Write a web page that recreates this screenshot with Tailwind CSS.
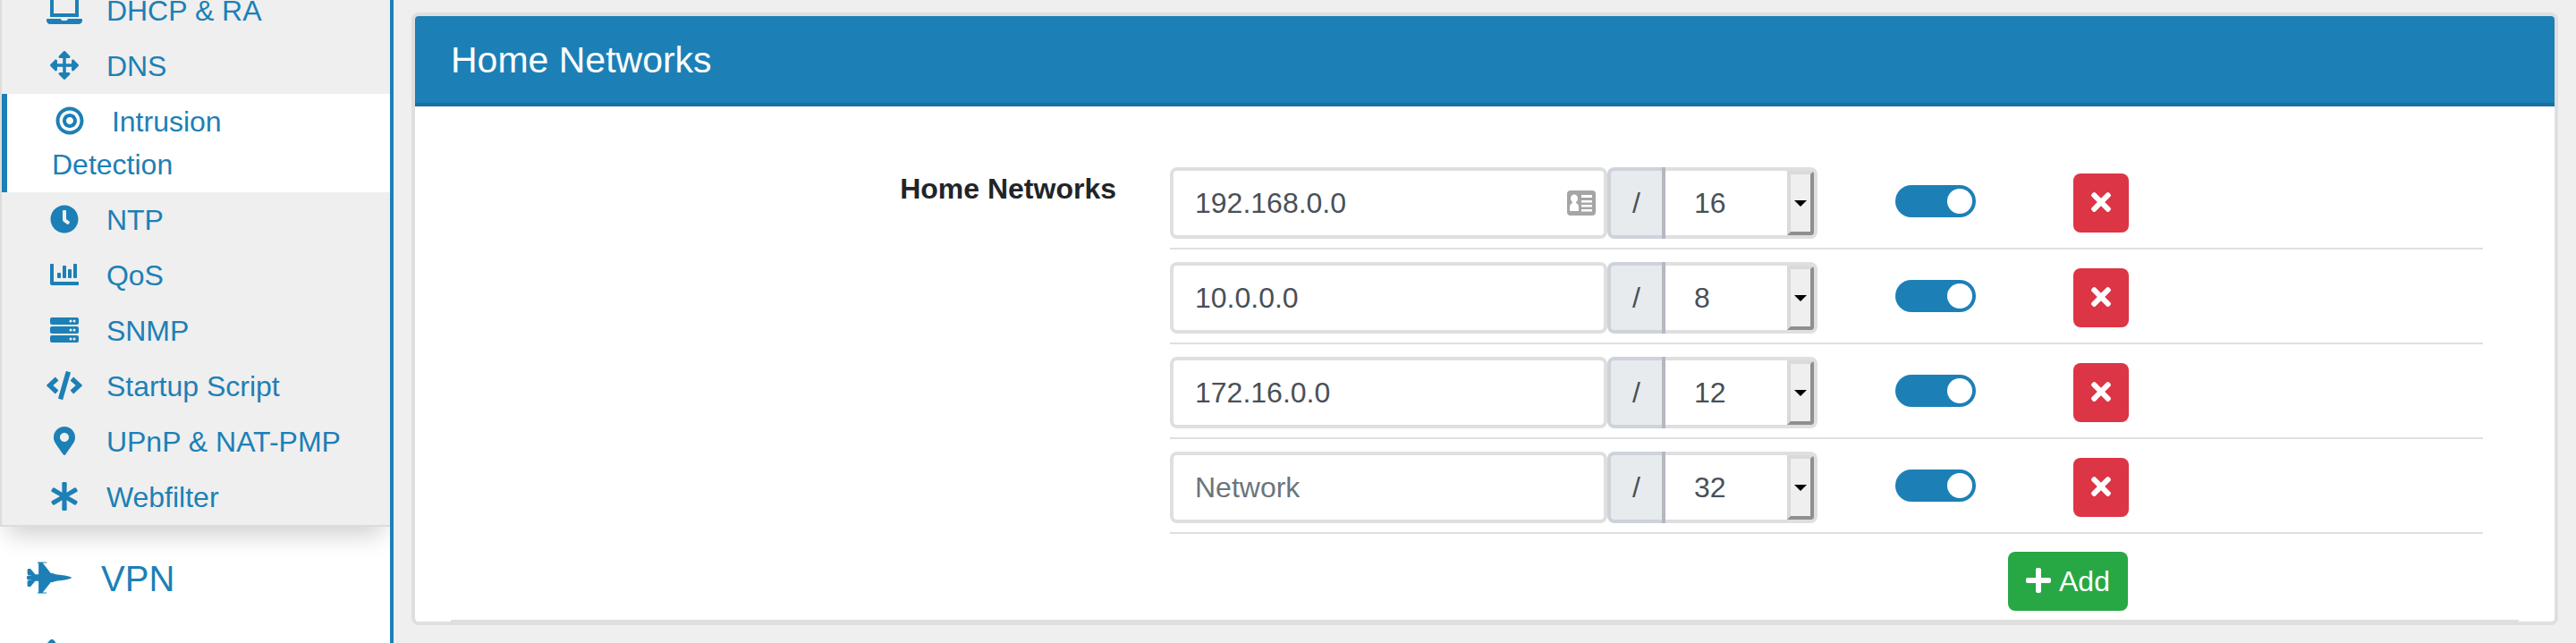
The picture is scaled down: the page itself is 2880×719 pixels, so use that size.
<!DOCTYPE html>
<html lang="en">
<head>
  <meta charset="UTF-8" />
  <meta name="viewport" content="width=device-width, initial-scale=1.0"/>
  <title>Home Networks - Intrusion Detection</title>
  <script src="https://cdn.jsdelivr.net/npm/@tailwindcss/browser@4"></script>
</head>
<body class="bg-[#efefef] font-['Liberation_Sans',Arial,sans-serif] text-[32px] leading-[48px] text-[#212529] overflow-hidden">

  <!-- Shared icons -->
  <svg class="hidden">
    <symbol id="times" viewBox="0 0 352 512"><path d="M242.72 256l100.07-100.07c12.28-12.28 12.28-32.19 0-44.48l-22.24-22.24c-12.28-12.28-32.19-12.28-44.48 0L176 189.28 75.93 89.21c-12.28-12.28-32.19-12.28-44.48 0L9.21 111.45c-12.28 12.28-12.28 32.19 0 44.48L109.28 256 9.21 356.07c-12.28 12.28-12.28 32.19 0 44.48l22.24 22.24c12.28 12.28 32.2 12.28 44.48 0L176 322.72l100.07 100.07c12.28 12.28 32.2 12.28 44.48 0l22.24-22.24c12.28-12.28 12.28-32.19 0-44.48L242.72 256z"/></symbol>
    <symbol id="caret" viewBox="0 0 14 7"><path d="M0 0h14L7 7z"/></symbol>
  </svg>

  <div class="flex h-[719px] overflow-hidden">

    <!-- Sidebar -->
    <aside class="w-[440px] shrink-0 bg-white border-r-4 border-[#1c80b6] text-[#1c80b6] overflow-hidden">
      <ul class="-mt-[19px] bg-[#efefef] border-l-2 border-b-2 border-[#dcdcdc] shadow-[0_16px_26px_-8px_rgba(0,0,0,0.2)]">
        <li class="pl-[50px] py-[7px]"><a href="#"><svg class="inline w-10 h-8 mr-[18px] align-[-4px]" viewBox="0 0 640 512" fill="currentColor"><path d="M624 416H381.54c-.74 19.81-14.71 32-32.74 32H288c-18.69 0-33.02-17.47-32.77-32H16c-8.8 0-16 7.2-16 16v16c0 35.2 28.8 64 64 64h512c35.2 0 64-28.8 64-64v-16c0-8.8-7.2-16-16-16zM576 48c0-26.4-21.6-48-48-48H112C85.6 0 64 21.6 64 48v336h512V48zm-64 272H128V64h384v256z"/></svg> DHCP &amp; RA</a></li>
        <li class="pl-[50px] py-[7px]"><a href="#"><svg class="inline w-10 h-8 mr-[18px] align-[-4px]" viewBox="0 0 512 512" fill="currentColor"><path d="M352.201 425.775l-79.196 79.196c-9.373 9.373-24.568 9.373-33.941 0l-79.196-79.196c-15.119-15.119-4.411-40.971 16.971-40.97h51.162L228 284H127.196v51.162c0 21.382-25.851 32.09-40.971 16.971L7.029 272.937c-9.373-9.373-9.373-24.569 0-33.941L86.225 159.8c15.119-15.119 40.971-4.411 40.971 16.971V228H228V127.196h-51.23c-21.382 0-32.09-25.851-16.971-40.971l79.196-79.196c9.373-9.373 24.568-9.373 33.941 0l79.196 79.196c15.119 15.119 4.411 40.971-16.971 40.971h-51.162V228h100.804v-51.162c0-21.382 25.851-32.09 40.97-16.971l79.196 79.196c9.373 9.373 9.373 24.569 0 33.941L425.773 352.2c-15.119 15.119-40.971 4.411-40.97-16.971V284H284v100.804h51.23c21.382 0 32.09 25.851 16.971 40.971z"/></svg> DNS</a></li>
        <li class="pl-[50px] py-[7px] pr-20 bg-white border-l-6 border-[#1c80b6]"><a href="#"><svg class="inline w-10 h-8 mr-[18px] align-[-4px]" viewBox="0 0 496 512" fill="currentColor"><path d="M248 8C111.03 8 0 119.03 0 256s111.03 248 248 248 248-111.03 248-248S384.97 8 248 8zm0 432c-101.69 0-184-82.29-184-184 0-101.69 82.29-184 184-184 101.69 0 184 82.29 184 184 0 101.69-82.29 184-184 184zm0-312c-70.69 0-128 57.31-128 128s57.31 128 128 128 128-57.31 128-128-57.31-128-128-128zm0 192c-35.29 0-64-28.71-64-64s28.71-64 64-64 64 28.71 64 64-28.71 64-64 64z"/></svg> Intrusion Detection</a></li>
        <li class="pl-[50px] py-[7px]"><a href="#"><svg class="inline w-10 h-8 mr-[18px] align-[-4px]" viewBox="0 0 512 512" fill="currentColor"><path d="M256,8C119,8,8,119,8,256S119,504,256,504,504,393,504,256,393,8,256,8Zm92.49,313h0l-20,25a16,16,0,0,1-22.49,2.5h0l-67-49.72a40,40,0,0,1-15-31.23V112a16,16,0,0,1,16-16h32a16,16,0,0,1,16,16V256l58,42.5A16,16,0,0,1,348.49,321Z"/></svg> NTP</a></li>
        <li class="pl-[50px] py-[7px]"><a href="#"><svg class="inline w-10 h-8 mr-[18px] align-[-4px]" viewBox="0 0 512 512" fill="currentColor"><path d="M332.8 320h38.4c6.4 0 12.8-6.4 12.8-12.8V172.8c0-6.4-6.4-12.8-12.8-12.8h-38.4c-6.4 0-12.8 6.4-12.8 12.8v134.4c0 6.4 6.4 12.8 12.8 12.8zm96 0h38.4c6.4 0 12.8-6.4 12.8-12.8V76.8c0-6.4-6.4-12.8-12.8-12.8h-38.4c-6.4 0-12.8 6.4-12.8 12.8v230.4c0 6.4 6.4 12.8 12.8 12.8zm-288 0h38.4c6.4 0 12.8-6.4 12.8-12.8v-70.4c0-6.4-6.4-12.8-12.8-12.8h-38.4c-6.4 0-12.8 6.4-12.8 12.8v70.4c0 6.4 6.4 12.8 12.8 12.8zm96 0h38.4c6.4 0 12.8-6.4 12.8-12.8V108.8c0-6.4-6.4-12.8-12.8-12.8h-38.4c-6.4 0-12.8 6.4-12.8 12.8v198.4c0 6.4 6.4 12.8 12.8 12.8zM496 384H64V80c0-8.84-7.16-16-16-16H16C7.16 64 0 71.16 0 80v336c0 17.67 14.33 32 32 32h464c8.84 0 16-7.16 16-16v-32c0-8.84-7.16-16-16-16z"/></svg> QoS</a></li>
        <li class="pl-[50px] py-[7px]"><a href="#"><svg class="inline w-10 h-8 mr-[18px] align-[-4px]" viewBox="0 0 512 512" fill="currentColor"><rect y="32" width="512" height="128" rx="32"/><rect y="192" width="512" height="128" rx="32"/><rect y="352" width="512" height="128" rx="32"/><g fill="#efefef"><circle cx="368" cy="96" r="24"/><circle cx="432" cy="96" r="24"/><circle cx="368" cy="256" r="24"/><circle cx="432" cy="256" r="24"/><circle cx="368" cy="416" r="24"/><circle cx="432" cy="416" r="24"/></g></svg> SNMP</a></li>
        <li class="pl-[50px] py-[7px]"><a href="#"><svg class="inline w-10 h-8 mr-[18px] align-[-4px]" viewBox="0 0 640 512" fill="currentColor"><path d="M278.9 511.5l-61-17.7c-6.4-1.8-10-8.5-8.2-14.9L346.2 8.7c1.8-6.4 8.5-10 14.9-8.2l61 17.7c6.4 1.8 10 8.5 8.2 14.9L293.8 503.3c-1.9 6.4-8.5 10.1-14.9 8.2zm-114-112.2l43.5-46.4c4.6-4.9 4.3-12.7-.8-17.2L117 256l90.6-79.7c5.1-4.5 5.5-12.3.8-17.2l-43.5-46.4c-4.5-4.8-12.1-5.1-17-.5L3.8 247.2c-5.1 4.7-5.1 12.8 0 17.5l144.1 135.1c4.9 4.6 12.5 4.4 17-.5zm327.2.6l144.1-135.1c5.1-4.7 5.1-12.8 0-17.5L492.1 112.1c-4.8-4.5-12.4-4.3-17 .5L431.6 159c-4.6 4.9-4.3 12.7.8 17.2L523 256l-90.6 79.7c-5.1 4.5-5.5 12.3-.8 17.2l43.5 46.4c4.5 4.9 12.1 5.1 17 .6z"/></svg> Startup Script</a></li>
        <li class="pl-[50px] py-[7px]"><a href="#"><svg class="inline w-10 h-8 mr-[18px] align-[-4px]" viewBox="0 0 384 512" fill="currentColor"><path d="M172.268 501.67C26.97 291.031 0 269.413 0 192 0 85.961 85.961 0 192 0s192 85.961 192 192c0 77.413-26.97 99.031-172.268 309.67-9.535 13.774-29.93 13.773-39.464 0zM192 272c44.183 0 80-35.817 80-80s-35.817-80-80-80-80 35.817-80 80 35.817 80 80 80z"/></svg> UPnP &amp; NAT-PMP</a></li>
        <li class="pl-[50px] py-[7px]"><a href="#"><svg class="inline w-10 h-8 mr-[18px] align-[-4px]" viewBox="0 0 512 512" fill="currentColor"><path d="M478.21 334.093L336 256l142.21-78.093c11.795-6.477 15.961-21.384 9.232-33.037l-19.48-33.741c-6.728-11.653-21.72-15.499-33.227-8.523L296 186.718l3.475-162.204C299.763 11.061 288.937 0 275.48 0h-38.96c-13.456 0-24.283 11.061-23.994 24.514L216 186.718 77.265 102.607c-11.506-6.976-26.499-3.13-33.227 8.523l-19.48 33.741c-6.728 11.653-2.562 26.56 9.233 33.037L176 256 33.79 334.093c-11.795 6.477-15.961 21.384-9.232 33.037l19.48 33.741c6.728 11.653 21.721 15.499 33.227 8.523L216 325.282l-3.475 162.204C212.237 500.939 223.064 512 236.52 512h38.961c13.456 0 24.283-11.061 23.995-24.514L296 325.282l138.735 84.111c11.506 6.976 26.499 3.13 33.227-8.523l19.48-33.741c6.728-11.653 2.563-26.559-9.232-33.036z"/></svg> Webfilter</a></li>
      </ul>

      <ul class="text-[40px] leading-[60px] pt-7 pl-[30px]">
        <li><a href="#"><svg class="inline w-[50px] h-10 mr-[22px] align-[-5px]" viewBox="0 0 640 512" fill="currentColor"><path d="M544 224l-128-16-48-16h-24L227.158 44h39.509C278.333 44 288 41.375 288 38s-9.667-6-21.333-6H152v12h16v164h-48l-66.667-80H18.667L8 138.667V208h8v16h48v2.666l-64 8v42.667l64 8V288H16v16H8v69.333L18.667 384h34.667L120 304h48v164h-16v12h114.667c11.667 0 21.333-2.625 21.333-6s-9.667-6-21.333-6h-39.509L344 320h24l48-16 128-16c96-21.333 96-26.583 96-32 0-5.417 0-10.667-96-32z"/></svg> VPN</a></li>
        <li class="pt-[37px]"><svg class="block w-[50px] h-10" viewBox="0 0 50 40" fill="currentColor"><path d="M22 6l4-4.300q2-2 4 0l2 2.300V40H22z"/></svg></li>
      </ul>
    </aside>

    <!-- Content -->
    <main class="flex-1 pl-5 pr-5 pt-[14px]">
      <section class="h-[685px] bg-white border-4 border-[#dfdfdf] rounded-lg overflow-hidden">
        <h2 class="h-[101px] px-10 pt-2 bg-[#1c80b6] border-b-4 border-[#186fa0] text-white text-[41px] leading-[83px]">Home Networks</h2>

        <div class="flex h-[574px] pt-[54px]">
          <label class="w-[784px] pt-[14px] text-right font-bold">Home Networks</label>

          <div class="w-[1468px] ml-[60px] text-[#495057]">
            <div id="networks"></div>

            <!-- Add row -->
            <div class="flex justify-end pt-5 pr-[397px]">
              <button class="flex items-center gap-[9px] w-[134px] h-[66px] pl-5 rounded-lg bg-[#28a745] text-white"><svg class="w-7 h-8 mb-0.5 shrink-0" viewBox="0 0 448 512" fill="currentColor"><path d="M416 208H272V64c0-17.670-14.330-32-32-32h-32c-17.670 0-32 14.330-32 32v144H32c-17.670 0-32 14.330-32 32v32c0 17.670 14.330 32 32 32h144v144c0 17.670 14.330 32 32 32h32c17.670 0 32-14.330 32-32V304h144c17.670 0 32-14.330 32-32v-32c0-17.670-14.330-32-32-32z"/></svg>Add</button>
            </div>
          </div>
        </div>
        <hr class="mx-10 border-t-2 border-[#dfdfdf]" />
      </section>
    </main>
  </div>

  <script>
    const networks = [
      { address: '192.168.0.0', mask: 16, card: true },
      { address: '10.0.0.0', mask: 8 },
      { address: '172.16.0.0', mask: 12 },
      { address: '', mask: 32 }
    ];

    // contact card shown inside the first input
    const card = `<svg class="w-8 h-7 mr-[9px] shrink-0" viewBox="0 0 32 28"><rect width="32" height="28" rx="4" fill="#a5a5a5"/><g fill="#fff"><ellipse cx="8" cy="9" rx="4" ry="4.500"/><path d="M6 12h4v2q3 1 3 5v4H3v-4q0-4 3-5z"/><path d="M16 5h12v3H16zM16 11h12v2.500H16zM16 16h12v2.500H16zM16 21h12v2.500H16z"/></g></svg>`;

    document.getElementById('networks').innerHTML = networks.map((n) => `
      <div class="flex h-[106px] pt-[14px] border-b-2 border-[#dfdfdf]">
        <div class="flex items-center w-[489px] h-20 border-4 border-[#dfdfdf] rounded-lg">
          <input class="w-full min-w-0 pl-6 outline-none placeholder:text-[#6c757d]" type="text" value="${n.address}" placeholder="Network" />
          ${n.card ? card : ''}
        </div>
        <span class="w-[61px] h-20 bg-[#e7ebee] border-4 border-r-0 border-[#ced2db] rounded-l-lg text-center leading-[72px]">/</span>
        <span class="w-1 h-20 bg-[#b3b8c1]"></span>
        <div class="flex w-[170px] h-20 border-4 border-l-0 border-[#dfdfdf] rounded-r-lg">
          <select class="flex-1 min-w-0 pl-8 appearance-none outline-none"><option>${n.mask}</option></select>
          <span class="flex items-center justify-center w-[30px] h-[72px] bg-[#efefef] border-4 border-t-[#dadada] border-l-[#dadada] border-b-[#8f8f8f] border-r-[#8f8f8f] rounded-tr-sm rounded-br-sm"><svg class="w-[14px] h-[7px] shrink-0 fill-black"><use href="#caret"/></svg></span>
        </div>
        <span class="flex justify-end w-[90px] h-9 mt-5 ml-[87px] p-1 rounded-full bg-[#1c80b6]"><span class="size-7 rounded-full bg-white"></span></span>
        <button class="flex items-center justify-center w-[62px] h-[66px] mt-[7px] ml-[109px] pb-0.5 rounded-lg bg-[#dc3545]"><svg class="w-[22px] h-8 fill-white"><use href="#times"/></svg></button>
      </div>`).join('');
  </script>
</body>
</html>
